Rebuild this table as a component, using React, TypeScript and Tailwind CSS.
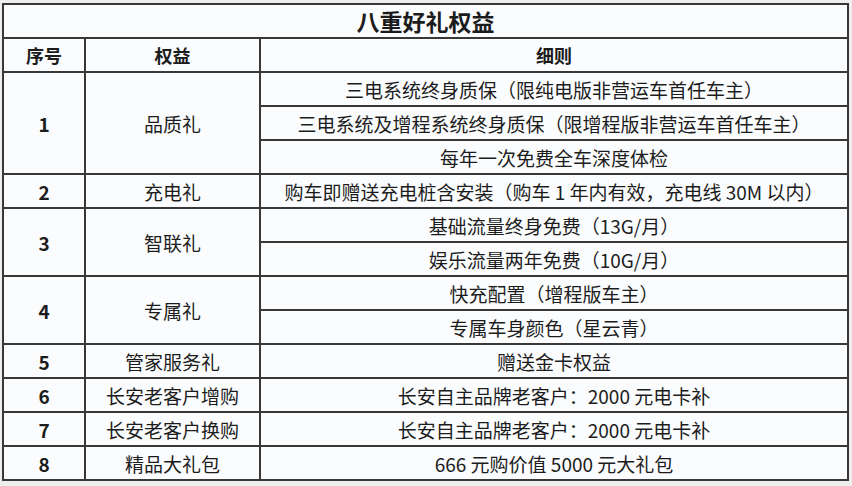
const rows: { no: string; name: string; items: string[] }[] = [
  {
    no: '1',
    name: '品质礼',
    items: [
      '三电系统终身质保（限纯电版非营运车首任车主）',
      '三电系统及增程系统终身质保（限增程版非营运车首任车主）',
      '每年一次免费全车深度体检',
    ],
  },
  { no: '2', name: '充电礼', items: ['购车即赠送充电桩含安装（购车 1 年内有效，充电线 30M 以内）'] },
  { no: '3', name: '智联礼', items: ['基础流量终身免费（13G/月）', '娱乐流量两年免费（10G/月）'] },
  { no: '4', name: '专属礼', items: ['快充配置（增程版车主）', '专属车身颜色（星云青）'] },
  { no: '5', name: '管家服务礼', items: ['赠送金卡权益'] },
  { no: '6', name: '长安老客户增购', items: ['长安自主品牌老客户：2000 元电卡补'] },
  { no: '7', name: '长安老客户换购', items: ['长安自主品牌老客户：2000 元电卡补'] },
  { no: '8', name: '精品大礼包', items: ['666 元购价值 5000 元大礼包'] },
]

const cell = 'border-2 border-[#383838] text-center align-middle p-0 h-[34px]'

export default function App() {
  return (
    <div
      className="w-[852px] h-[486px] bg-[#eeeeee] pt-[3px] pl-[2px]"
      style={{ fontFamily: '"Noto Sans CJK SC", "Noto Sans", sans-serif' }}
    >
      <table className="w-[847px] border-collapse bg-[#fbfcfe] text-[#1c1c1c] table-fixed">
        <colgroup>
          <col className="w-[82px]" />
          <col className="w-[175px]" />
          <col />
        </colgroup>
        <tbody>
          <tr>
            <td colSpan={3} className={`${cell} text-[23px] font-bold leading-none`}>
              八重好礼权益
            </td>
          </tr>
          <tr className="text-[18px] font-bold leading-none">
            <td className={cell}>序号</td>
            <td className={cell}>权益</td>
            <td className={cell}>细则</td>
          </tr>
          {rows.map(r =>
            r.items.map((item, i) => (
              <tr key={r.no + '-' + i} className="text-[19px] leading-none">
                {i === 0 && (
                  <>
                    <td rowSpan={r.items.length} className={`${cell} font-bold`}>
                      {r.no}
                    </td>
                    <td rowSpan={r.items.length} className={cell}>
                      {r.name}
                    </td>
                  </>
                )}
                <td className={`${cell} whitespace-nowrap`}>{item}</td>
              </tr>
            ))
          )}
        </tbody>
      </table>
    </div>
  )
}
